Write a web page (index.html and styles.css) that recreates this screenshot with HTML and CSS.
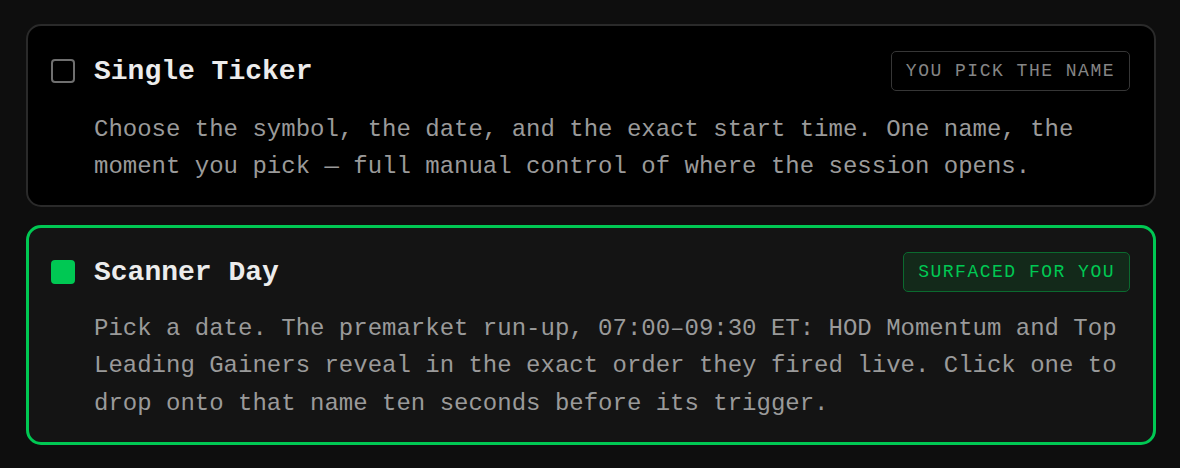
FILE: index.html
```html
<!DOCTYPE html>
<html>
<head>
<meta charset="utf-8">
<link rel="stylesheet" href="styles.css">
</head>
<body>
<div class="list">
  <div class="card">
    <div class="head">
      <span class="check"></span>
      <span class="title">Single Ticker</span>
      <span class="badge">YOU PICK THE NAME</span>
    </div>
    <p class="desc">Choose the symbol, the date, and the exact start time. One name, the moment you pick — full manual control of where the session opens.</p>
  </div>
  <div class="card selected">
    <div class="head">
      <span class="check"></span>
      <span class="title">Scanner Day</span>
      <span class="badge">SURFACED FOR YOU</span>
    </div>
    <p class="desc">Pick a date. The premarket run-up, 07:00–09:30 ET: HOD Momentum and Top Leading Gainers reveal in the exact order they fired live. Click one to drop onto that name ten seconds before its trigger.</p>
  </div>
</div>
</body>
</html>
```
FILE: styles.css
```css
html, body {
  margin: 0;
  background: #0e0e0e;
}
body {
  font-family: "Liberation Mono", "DejaVu Sans Mono", monospace;
  padding: 24px 24px 0 26px;
}
.list {
  display: flex;
  flex-direction: column;
  gap: 18px;
}
.card {
  background: #000;
  border: 2px solid #2a2a2a;
  border-radius: 15px;
  padding: 25px 24px 19px 23px;
}
.card.selected {
  background: #141414;
  border: 3px solid #00c853;
  padding: 24px 23px 20px 22px;
}
.head {
  display: flex;
  align-items: center;
  height: 40px;
}
.check {
  width: 24px;
  height: 24px;
  box-sizing: border-box;
  border: 2px solid #6f6f6f;
  border-radius: 4px;
  margin-right: 19px;
  flex: none;
}
.selected .check {
  background: #00c853;
  border-color: #00c853;
}
.title {
  flex: 1;
  color: #ececec;
  font-size: 28px;
  font-weight: bold;
  line-height: 1;
  padding-top: 2px;
}
.badge {
  box-sizing: border-box;
  height: 40px;
  line-height: 38px;
  padding: 0 14px;
  border: 1px solid #363636;
  border-radius: 5px;
  color: #858585;
  font-size: 18px;
  letter-spacing: 1.5px;
}
.selected .badge {
  background: #13291a;
  border-color: #0b6a2f;
  color: #00c853;
}
.desc {
  margin: 20px 0 0 43px;
  color: #9a9a9a;
  font-size: 24px;
  line-height: 37.4px;
}
.selected .desc {
  margin-top: 18px;
}
```
